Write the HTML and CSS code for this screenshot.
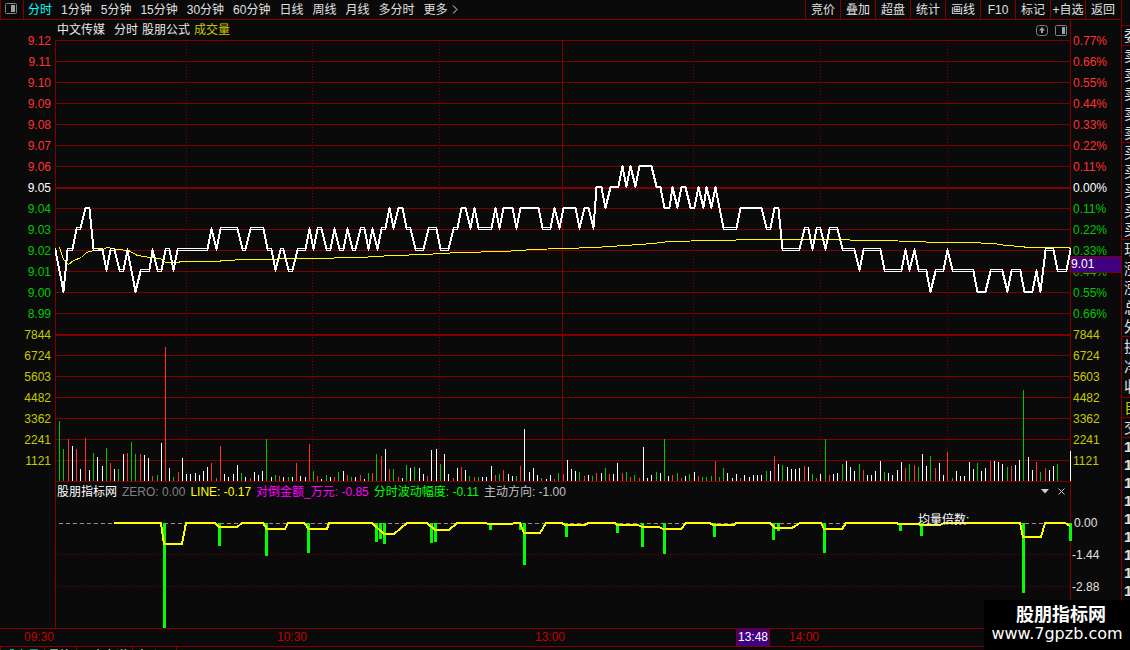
FILE: index.html
```html
<!DOCTYPE html>
<html lang="zh-CN">

<head>
    <meta charset="UTF-8">
    <meta name="viewport" content="width=device-width, initial-scale=1.0">
    <title>中文传媒 分时</title>
    <link rel="stylesheet" href="styles.css">
</head>

<body>
    <div class="app">
        <main class="terminal">
            <header class="toolbar">
                <button class="panel-toggle" aria-label="侧栏">
                    <svg width="12" height="11" viewBox="0 0 12 11">
                        <rect x="0.5" y="0.5" width="11" height="10" rx="1" fill="none" stroke="#808080" />
                        <rect x="6" y="2" width="4" height="7" fill="#a0a0a0" />
                    </svg>
                </button>
                <nav class="periods">
                    <a href="#" class="active">分时</a>
                    <a href="#">1分钟</a>
                    <a href="#">5分钟</a>
                    <a href="#">15分钟</a>
                    <a href="#">30分钟</a>
                    <a href="#">60分钟</a>
                    <a href="#">日线</a>
                    <a href="#">周线</a>
                    <a href="#">月线</a>
                    <a href="#">多分时</a>
                    <a href="#" class="more">更多
                        <svg width="6" height="9" viewBox="0 0 6 9">
                            <path d="M1 0.5L5 4.5L1 8.5" fill="none" stroke="#e0e0e0" />
                        </svg>
                    </a>
                </nav>
                <div class="tools">
                    <button>竞价</button>
                    <button>叠加</button>
                    <button>超盘</button>
                    <button>统计</button>
                    <button>画线</button>
                    <button>F10</button>
                    <button>标记</button>
                    <button>+自选</button>
                    <button>返回</button>
                </div>
            </header>

            <section class="chart">
                <ul class="axis axis-left">
                    <li class="up">9.12</li>
                    <li class="up">9.11</li>
                    <li class="up">9.10</li>
                    <li class="up">9.09</li>
                    <li class="up">9.08</li>
                    <li class="up">9.07</li>
                    <li class="up">9.06</li>
                    <li>9.05</li>
                    <li class="down">9.04</li>
                    <li class="down">9.03</li>
                    <li class="down">9.02</li>
                    <li class="down">9.01</li>
                    <li class="down">9.00</li>
                    <li class="down">8.99</li>
                    <li class="vol">7844</li>
                    <li class="vol">6724</li>
                    <li class="vol">5603</li>
                    <li class="vol">4482</li>
                    <li class="vol">3362</li>
                    <li class="vol">2241</li>
                    <li class="vol">1121</li>
                </ul>

                <div class="board">
                    <div class="title-row">
                        <span class="stock">中文传媒</span>
                        <span>分时</span>
                        <span>股朋公式</span>
                        <span class="vol">成交量</span>
                        <div class="title-icons">
                            <button aria-label="上移">
                                <svg width="12" height="11" viewBox="0 0 12 11">
                                    <rect x="0.5" y="0.5" width="11" height="10" rx="3" fill="none" stroke="#808080" />
                                    <path d="M6 2L9 5.5H7V8H5V5.5H3Z" fill="#a0a0a0" />
                                </svg>
                            </button>
                            <button aria-label="侧栏">
                                <svg width="12" height="11" viewBox="0 0 12 11">
                                    <rect x="0.5" y="0.5" width="11" height="10" rx="1" fill="none" stroke="#808080" />
                                    <rect x="7" y="2" width="3" height="7" fill="#a0a0a0" />
                                </svg>
                            </button>
                        </div>
                    </div>

                    <div class="plots">
                        <svg class="plot price-plot" viewBox="56 40 1014 442" preserveAspectRatio="none">
                            <path id="grid" class="grid" />
                            <path id="gridDots" class="grid dotted" />
                            <path id="volRed" class="vol-red" />
                            <path id="volGreen" class="vol-green" />
                            <path id="volWhite" class="vol-white" />
                            <path id="average" class="average" />
                            <path id="priceTop" class="price" />
                            <path id="priceBottom" class="price" />
                            <path id="priceSlopes" class="price slopes" />
                        </svg>

                        <div class="legend">
                            <span>股朋指标网</span>
                            <span class="zero">ZERO: 0.00</span>
                            <span class="line">LINE: -0.17</span>
                            <span class="cross">对倒金额_万元: -0.85</span>
                            <span class="wave">分时波动幅度: -0.11</span>
                            <span class="dir">主动方向: -1.00</span>
                            <div class="legend-icons">
                                <button aria-label="菜单">
                                    <svg width="8" height="5" viewBox="0 0 8 5">
                                        <path d="M0 0H8L4 4.5Z" fill="#d0d0d0" />
                                    </svg>
                                </button>
                                <button aria-label="关闭">
                                    <svg width="7" height="7" viewBox="0 0 7 7">
                                        <path d="M0.5 0.5L6.5 6.5M6.5 0.5L0.5 6.5" stroke="#d0d0d0" />
                                    </svg>
                                </button>
                            </div>
                        </div>

                        <div class="sub">
                            <svg class="plot sub-plot" viewBox="56 502 1014 126" preserveAspectRatio="none">
                                <path class="grid dotted" d="M58 554.5H1070M58 586.5H1070" />
                                <path class="grid" d="M58 523.5H1070" stroke-dasharray="1 6" />
                                <path class="zero-line" d="M59 523.5H1070" />
                                <path id="waves" class="waves" />
                                <path id="signal" class="signal" />
                            </svg>
                            <span class="note">均量倍数:</span>
                        </div>
                    </div>
                </div>

                <div class="right">
                    <ul class="axis axis-right">
                        <li class="up">0.77%</li>
                        <li class="up">0.66%</li>
                        <li class="up">0.55%</li>
                        <li class="up">0.44%</li>
                        <li class="up">0.33%</li>
                        <li class="up">0.22%</li>
                        <li class="up">0.11%</li>
                        <li>0.00%</li>
                        <li class="down">0.11%</li>
                        <li class="down">0.22%</li>
                        <li class="down">0.33%</li>
                        <li class="down">0.44%<span class="cursor-price">9.01</span></li>
                        <li class="down">0.55%</li>
                        <li class="down">0.66%</li>
                        <li class="vol">7844</li>
                        <li class="vol">6724</li>
                        <li class="vol">5603</li>
                        <li class="vol">4482</li>
                        <li class="vol">3362</li>
                        <li class="vol">2241</li>
                        <li class="vol">1121</li>
                    </ul>
                    <ul class="axis axis-sub">
                        <li class="origin">0.00</li>
                        <li>-1.44</li>
                        <li>-2.88</li>
                    </ul>
                </div>
            </section>

            <div class="times">
                <span class="first">09:30</span>
                <span>10:30</span>
                <span>13:00</span>
                <span><b class="cursor-time">13:48</b></span>
                <span>14:00</span>
            </div>

            <nav class="tabs">
                <a href="#" class="active">成交量</a>
                <a href="#">量比</a>
                <a href="#">买卖力道</a>
                <a href="#">竞价图</a>
            </nav>
        </main>

        <aside class="quotes">
            <ul class="top"><li>委</li></ul>
            <ul class="five"><li>卖</li><li>卖</li><li>卖</li><li>卖</li><li>卖</li></ul>
            <ul class="five"><li>买</li><li>买</li><li>买</li><li>买</li><li>买</li></ul>
            <ul class="five"><li>现</li><li>涨</li><li>涨</li><li>总</li><li>外</li></ul>
            <ul class="three"><li>换</li><li>净</li><li>收</li></ul>
            <ul class="vol"><li>自</li></ul>
            <ul><li>交</li></ul>
            <ul class="ticks">
                <li>1</li><li>1</li><li>1</li><li>1</li><li>1</li><li>1</li><li>1</li><li>1</li><li>1</li>
            </ul>
        </aside>

        <div class="watermark">
            <strong>股朋指标网</strong>
            <span>www.7gpzb.com</span>
        </div>
    </div>
    <script src="script.js"></script>
</body>

</html>
```
FILE: styles.css
```css
* {
    margin: 0;
    padding: 0;
    box-sizing: border-box;
}

body {
    height: 100vh;
    overflow: hidden;
    background: #0a0a0a;
    color: #fff;
    font-family: "Liberation Sans", "Noto Sans CJK SC", sans-serif;
    font-size: 12px;
    line-height: 16px;
}

ul {
    list-style: none;
}

a {
    color: inherit;
    text-decoration: none;
}

button {
    border: 0;
    background: none;
    color: inherit;
    font: inherit;
}

svg {
    display: block;
}

.app {
    position: relative;
    display: flex;
    height: 100vh;
    overflow: hidden;
}

.terminal {
    flex: 1;
    min-width: 0;
}

.up {
    color: #ff3232;
}

.down {
    color: #00c800;
}

.vol {
    color: #c8c800;
}

/* toolbar */
.toolbar {
    display: flex;
    height: 20px;
    padding-right: 1px;
    border-left: 1px solid #800000;
    border-bottom: 1px solid #800000;
    color: #e0e0e0;
    white-space: nowrap;
}

.panel-toggle {
    width: 23px;
    padding: 0 0 2px 4px;
    border-right: 1px solid #800000;
}

.periods {
    display: flex;
    align-items: center;
    gap: 9px;
    padding-left: 4px;
}

.periods .active {
    color: #00ffff;
}

.more {
    display: flex;
    align-items: center;
    gap: 4px;
}

.tools {
    display: flex;
    margin-left: auto;
}

.tools button {
    width: 35px;
    border-left: 1px solid #800000;
}

/* chart */
.chart {
    display: grid;
    grid-template-columns: 55px 1fr 50px;
}

.axis-left,
.axis-right {
    padding-top: 10px;
}

.axis-left {
    padding-right: 4px;
    text-align: right;
}

.axis-left li,
.axis-right li {
    height: 21px;
    line-height: 22px;
}

.axis-right li,
.axis-sub li {
    position: relative;
    padding-left: 2px;
}

.axis-sub {
    padding-top: 36px;
    color: #e0e0e0;
}

.axis-sub li {
    height: 32px;
    line-height: 32px;
    padding-left: 1px;
}

.axis-sub .origin {
    padding-left: 3px;
}

.cursor-price {
    position: absolute;
    top: -5px;
    left: 0;
    width: 100%;
    height: 17px;
    border-top: 1px solid #800000;
    border-bottom: 1px solid #800000;
    background: #400080;
    color: #fff;
    line-height: 15px;
}

.board {
    min-width: 0;
    border-right: 1px solid #800000;
}

.title-row {
    display: flex;
    align-items: center;
    gap: 4px;
    height: 20px;
    padding: 0 3px 0 2px;
    color: #e8e8e8;
}

.title-row .vol {
    color: #c8c800;
}

.stock {
    margin-right: 5px;
}

.title-icons {
    display: flex;
    gap: 7px;
    margin-left: auto;
}

.plots {
    border-left: 1px solid #800000;
}

.plot {
    width: 100%;
    overflow: visible;
    fill: none;
    shape-rendering: crispEdges;
}

.price-plot {
    height: 442px;
}

.sub-plot {
    height: 126px;
}

.grid {
    stroke: #800000;
}

.dotted {
    stroke-dasharray: 1 2;
}

.vol-red {
    stroke: #ff3232;
}

.vol-green {
    stroke: #00c800;
}

.vol-white,
.price {
    stroke: #fff;
}

.slopes {
    stroke-width: 2;
}

.average {
    stroke: #ffff00;
}

.zero-line {
    stroke: #909090;
    stroke-dasharray: 4 3;
}

.waves {
    stroke: #00ff00;
    stroke-width: 3;
}

.signal {
    stroke: #ffff00;
    stroke-width: 2;
}

.legend {
    display: flex;
    align-items: center;
    gap: 5px;
    height: 20px;
    padding: 0 5px 1px 1px;
    white-space: nowrap;
}

.zero {
    color: #808080;
}

.line {
    color: #ffff00;
}

.cross {
    color: #ff00ff;
}

.wave {
    color: #00ff00;
}

.dir {
    color: #c0c0c0;
}

.legend-icons {
    display: flex;
    align-items: center;
    gap: 9px;
    margin-left: auto;
}

.sub {
    position: relative;
}

.note {
    position: absolute;
    top: 10px;
    left: 85%;
}

/* time axis */
.times {
    display: grid;
    grid-template-columns: 277fr 258fr 201fr 53fr 332fr;
    height: 19px;
    border-top: 1px solid #800000;
    border-bottom: 1px solid #800000;
    color: #c80000;
    line-height: 17px;
}

.times .first {
    padding-left: 24px;
}

.cursor-time {
    display: inline-block;
    padding: 0 1px;
    border-right: 1px solid #800000;
    border-left: 1px solid #800000;
    background: #400080;
    color: #fff;
    font-weight: normal;
}

.tabs {
    display: flex;
    border-left: 1px solid #800000;
}

.tabs a {
    padding: 1px 4px 0 3px;
    border-right: 1px solid #800000;
}

.tabs .active {
    color: #00ffff;
}

/* quote column, cut by the window edge */
.quotes {
    width: 9px;
    overflow: hidden;
    padding-top: 25px;
    border-left: 1px solid #800000;
    color: #e0e0e0;
    font-size: 15px;
}

.quotes ul {
    display: flex;
    flex-direction: column;
    height: 20px;
    padding-left: 2px;
    border-top: 1px solid #800000;
}

.quotes li {
    flex: 1;
    width: 16px;
    line-height: 19px;
}

.quotes .five {
    height: 97px;
}

.quotes .three {
    height: 61px;
}

.quotes .ticks {
    height: 163px;
    font-weight: bold;
}

.quotes .ticks li {
    line-height: 18px;
}

/* site mark */
.watermark {
    position: absolute;
    right: 0;
    bottom: 0;
    display: flex;
    flex-direction: column;
    align-items: center;
    width: 146px;
    height: 50px;
    padding: 6px 0 0 8px;
    background: #000;
}

.watermark strong {
    font-size: 18px;
    line-height: 18px;
}

.watermark span {
    margin-right: 8px;
    font-family: "DejaVu Sans", sans-serif;
    font-size: 16px;
    line-height: 20px;
}
```
FILE: script.js
```js
// time position and price in cents, 902 = 9.02
const prices = `55,902 63,900 67,902 72,902 76,903 80,903 85,904 89,904 93,902 102,902 106,901 110,902
114,902 119,901 123,901 127,902 135,900 140,901 149,901 152,902 157,901 161,901 165,902 169,902 173,901
177,902 207,902 211,903 216,902 220,903 237,903 242,902 245,902 250,903 263,903 267,902 271,902 275,901
280,902 283,902 288,901 292,901 297,902 305,902 309,903 313,902 317,903 321,903 326,902 330,902 334,903
339,902 343,902 347,903 352,902 355,902 360,903 364,903 368,902 372,903 377,902 381,903 385,903 389,904
393,903 398,904 402,904 406,903 410,903 415,902 423,902 428,903 436,903 440,902 448,902 453,903 457,903
461,904 465,904 470,903 474,904 478,903 491,903 495,904 499,903 503,904 512,904 516,903 520,904 538,904
542,903 550,903 554,904 559,903 563,904 575,904 579,903 584,904 588,904 593,903 596,905 601,905 605,904
610,905 618,905 622,906 626,905 630,906 635,905 639,906 651,906 656,905 660,905 664,904 669,904 672,905
677,904 681,905 685,905 690,904 694,904 698,905 703,904 706,905 711,904 715,905 723,903 736,903 740,904
761,904 766,903 770,903 774,904 778,904 782,902 799,902 804,903 808,903 812,902 816,903 820,903 825,902
829,903 837,903 842,902 854,902 859,901 863,902 880,902 884,901 901,901 905,902 909,901 914,902 918,901
926,901 930,900 935,901 943,901 947,902 952,901 973,901 977,900 985,900 990,901 1002,901 1007,900 1011,901
1020,901 1024,900 1032,900 1036,901 1040,900 1045,902 1053,902 1057,901 1066,901 1070,902`;

const average = `59,247 63,259 68,264 73,260 81,257 86,252 93,250 102,249 107,247 117,249 128,250 137,255
150,257 160,258 165,262 178,262 180,261 218,261 222,260 247,259 310,258 358,257 378,256 390,255 428,254
438,253 462,252 500,251 522,250 530,249 565,248 593,247 610,246 624,245 640,244 662,242 668,241 713,240
759,239 820,239 878,240 917,241 933,242 967,242 993,243 1005,245 1022,246 1026,247 1068,247 1070,248`;

// time position, colour, height
const volumes = `59g60 63g32 68r42 72w35 76r32 80w12 85r43 89w11 93g28 97w24 102w15 106g33 110r18 114w12
118g12 123w27 127r28 131g39 135g27 140r27 144w26 148w23 152r5 157g6 161w38 165r134 169w13 173g4 178r9
182w23 186w7 190w7 195w8 199w6 203w10 207w14 211r18 216g3 220r35 224w7 228w4 233w7 237w16 241g8 245w4
250r3 254w9 258w6 262w10 266g42 271w4 275g6 279r5 283w4 288g4 292w4 296r18 300w5 305w4 309r37 313g10
317r5 321w2 326g6 330w4 334r4 338g9 343w10 347r6 351g4 355w4 360r6 364w2 368g8 372r8 376g27 381r25 385w32
389r12 393g12 398r4 402w3 406g16 410w13 414g14 419w13 423w7 427r5 431w31 436w32 440g17 444w27 448w7 453r3
457w13 461r14 465w11 469g5 474r4 478g4 482w4 486w4 491w15 495r6 499g7 503r11 508w7 512w5 516g5 520r15
524w52 529w9 533w13 537w6 541g3 546w2 550w6 554r2 558g8 563r7 567w21 571w12 575w10 579g9 584r5 588w6
592g5 596r8 601w8 605g13 609r7 613w7 617w18 622r8 626g9 630r4 634g6 639r3 643w34 647w3 651w6 656g9 660w8
664g42 668w5 672r6 677g8 681r3 685w5 689g7 694w9 698r5 702g4 706g4 711g5 715r20 719g4 723g13 727w8 732w3
736w7 740r3 744w6 749w4 753w6 757w6 761w6 766g10 770w10 774r25 778w17 782g16 787w14 791w12 795w12 799w13
804r15 808w14 812g7 816r3 820w7 825g42 829r6 833w7 837w8 842g17 846w20 850w14 854w10 859g17 863r11 867w6
871w6 875w10 880w20 884g9 888w8 892w6 897w11 901w19 905r13 909g17 914r16 918g14 922w27 926w15 930g25
935r13 939w18 943w6 947r29 952g3 956w10 960w5 964w5 969w19 973w12 977g18 981w10 985w13 990r20 994w20
998w19 1002w17 1007g14 1011r15 1015w16 1019w21 1023g91 1028w24 1032w11 1036r19 1040g9 1045r13 1049w11
1053w15 1057g17 1070w30`;

const waves = `164,628 219,546 266,556 308,553 376,542 380,539 384,544 431,543 435,542 490,530 520,530
524,565 566,537 617,533 642,547 664,554 714,537 773,540 778,531 824,553 900,531 921,536 1023,593 1070,541`;

const signal = `114,523 161,523 164,544 182,544 186,523 215,523 219,527 237,527 242,523 263,523 267,529
285,529 288,523 304,523 309,529 327,529 329,523 372,523 384,534 394,534 407,523 427,523 435,530 449,530
457,523 486,523 488,524 512,524 514,523 520,523 524,533 540,533 546,523 562,523 565,525 585,525 588,523
615,523 617,525 638,525 642,527 659,527 663,529 681,529 686,523 710,523 713,525 734,525 736,523 770,523
775,528 792,528 800,523 821,523 824,529 842,529 846,523 896,523 899,524 918,524 921,525 940,525 944,523
1020,523 1023,537 1041,537 1045,523 1065,523 1070,526`;

// upper and lower edge of the price line at each price
const edges = {
    906: [165.5, 166.5],
    905: [186.5, 187.5],
    904: [207.5, 208.5],
    903: [227.5, 229.5],
    902: [248.5, 250.5],
    901: [269.5, 271.5],
    900: [291.5, 292.5]
};

const pairs = (text) => text.split(/\s+/).map((p) => p.split(',').map(Number));
const draw = (id, d) => document.getElementById(id).setAttribute('d', d);
const toPath = (points) => 'M' + points.map((p) => p.join(' ')).join('L');

// grid
let grid = 'M562.5 40V481';
for (let row = 0; row <= 21; row++) {
    const y = 40.5 + row * 21;
    grid += `M56 ${y}H1070`;
    if (row === 7 || row === 14) {
        grid += `M56 ${y + 1}H1070`;
    }
}
draw('grid', grid);
draw('gridDots', [186, 312, 439, 693, 820, 947].map((x) => `M${x}.5 43V481`).join(''));

// price and average
const points = pairs(prices);
draw('priceTop', toPath(points.map(([x, p]) => [x + 0.5, edges[p][0]])));
draw('priceBottom', toPath(points.map(([x, p]) => [x + 0.5, edges[p][1]])));
draw('average', toPath(pairs(average).map(([x, y]) => [x + 0.5, y + 0.5])));

// moves between two prices are drawn heavier than the flat parts
let slopes = '';
points.slice(1).forEach(([x, p], i) => {
    const [lastX, lastP] = points[i];
    if (p !== lastP) {
        slopes += `M${lastX + 0.5} ${edges[lastP][p > lastP ? 0 : 1]}L${x + 0.5} ${edges[p][p > lastP ? 1 : 0]}`;
    }
});
draw('priceSlopes', slopes);

// volume bars
const bars = { r: '', g: '', w: '' };
volumes.split(/\s+/).forEach((item) => {
    const [, x, colour, height] = item.match(/(\d+)([rgw])(\d+)/);
    bars[colour] += `M${x}.5 481v-${height}`;
});
draw('volRed', bars.r);
draw('volGreen', bars.g);
draw('volWhite', bars.w);

// lower indicator
draw('waves', pairs(waves).map(([x, y]) => `M${x}.5 523V${y}`).join(''));
draw('signal', toPath(pairs(signal)));
```
